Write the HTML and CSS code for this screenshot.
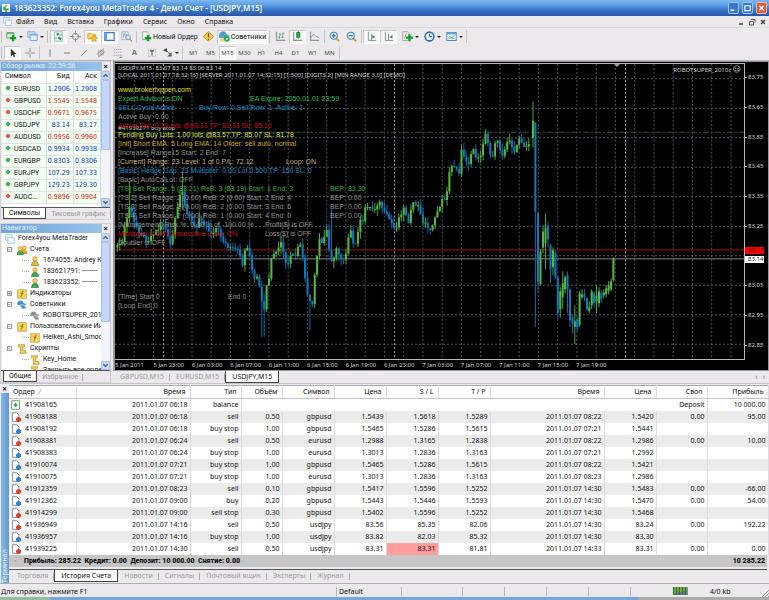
FILE: index.html
```html
<!DOCTYPE html>
<html lang="ru">
<head>
<meta charset="utf-8">
<title>183623352: Forex4you MetaTrader 4</title>
<link rel="stylesheet" href="styles.css">
</head>
<body>
<svg class="defs" aria-hidden="true">
  <defs>
    <symbol id="plus" viewBox="0 0 14 14"><path d="M1 2h9v7H1z" fill="#dff0e4" stroke="#4a9a62"/><path d="M1 2h9v2H1z" fill="#5db578"/><path d="M9 5v8M5 9h8" stroke="#0f9a25" stroke-width="3"/></symbol>
    <symbol id="windows" viewBox="0 0 14 14"><path d="M1 1h9v7H1z" fill="#cfe4f8" stroke="#6aa0d6"/><path d="M4 4h9v8H4z" fill="#e4f1fd" stroke="#5b95cf"/><path d="M4 4h9v2H4z" fill="#7db2e4"/></symbol>
    <symbol id="market" viewBox="0 0 14 14"><path d="M2 1h10v12H2z" fill="#eef8ee" stroke="#7fb2b8"/><path d="M4 4l2-2 2 2-2 2z" fill="#2b9b45"/><path d="M6 9l2-2 3 3-2 2z" fill="#2b9b45"/><path d="M8 5h3M3 9h2" stroke="#3a7fc4"/></symbol>
    <symbol id="target" viewBox="0 0 14 14"><circle cx="7" cy="7" r="4" fill="none" stroke="#888" stroke-width="1.2"/><path d="M7 0v5M7 9v5M0 7h5M9 7h5" stroke="#888" stroke-width="1.2"/></symbol>
    <symbol id="navi" viewBox="0 0 14 14"><path d="M1 3h4l1 1h5v6H1z" fill="#f8d65c" stroke="#c9962a"/><path d="M9 5l1.5 3 3 .4-2.200 2 .6 3L9 12l-2.800 1.400.6-3-2.200-2 3-.4z" fill="#f9c23a" stroke="#b88420" stroke-width=".7"/></symbol>
    <symbol id="term" viewBox="0 0 14 14"><path d="M1 2h12v10H1z" fill="#fff" stroke="#3b78c4" stroke-width="1.500"/><path d="M1 2h3v10H1z" fill="#6ea4de"/><path d="M6 10h6" stroke="#bcd" /></symbol>
    <symbol id="tester" viewBox="0 0 14 14"><path d="M1 1h8v10H1z" fill="#e5eef4" stroke="#9db4c4"/><path d="M3 3v5M5 2v5M7 4v5" stroke="#6c99b8"/><circle cx="9" cy="8" r="3" fill="#cfe8f4" stroke="#6b8ca0"/><path d="M11 10l3 4" stroke="#a58b50" stroke-width="1.500"/></symbol>
    <symbol id="order" viewBox="0 0 14 14"><path d="M2 1h6l2 2v8H2z" fill="#f7f7f7" stroke="#8a9a8a"/><path d="M9 5v8M5 9h8" stroke="#0f9a25" stroke-width="3"/></symbol>
    <symbol id="warn" viewBox="0 0 14 14"><path d="M7 0.500L13.500 7 7 13.500.5 7z" fill="#f5c93c" stroke="#b98a1c"/><path d="M7 3v5M7 9.500v1.500" stroke="#6b4a08" stroke-width="1.400"/></symbol>
    <symbol id="hat" viewBox="0 0 14 14"><path d="M0 6C1 0 8-1 9 4l4 2-3 2-9 1z" fill="#4fa0d0" stroke="#2c759f" stroke-width=".6"/><path d="M2 9h6l1 4H2z" fill="#efcf74"/><circle cx="10" cy="10" r="3.600" fill="#1ea63c"/><path d="M9 8l3 2-3 2z" fill="#fff"/></symbol>
    <symbol id="bars" viewBox="0 0 14 14"><path d="M2 1v11h11" fill="none" stroke="#8a9a92" stroke-width="1.500"/><path d="M6 3v7M4 8h2M6 4h2M10 2v7M10 3h2M8 8h2" stroke="#6c8478"/></symbol>
    <symbol id="candles" viewBox="0 0 14 14"><path d="M2 1v11h11" fill="none" stroke="#8a9a92" stroke-width="1.500"/><path d="M8 0v10" stroke="#17752b"/><path d="M6 2h4v6H6z" fill="#22b043" stroke="#17752b"/></symbol>
    <symbol id="line" viewBox="0 0 14 14"><path d="M2 1v11h11" fill="none" stroke="#8a9a92" stroke-width="1.500"/><path d="M3 8l3-4 3 3 4 1" fill="none" stroke="#6c8478"/></symbol>
    <symbol id="zin" viewBox="0 0 14 14"><path d="M9 9l4 4" stroke="#caa23c" stroke-width="2.500"/><circle cx="6" cy="6" r="4.500" fill="#d7ecfa" stroke="#4787c2" stroke-width="1.300"/><path d="M6 3.500v5M3.500 6h5" stroke="#1d62a8" stroke-width="1.300"/></symbol>
    <symbol id="zout" viewBox="0 0 14 14"><path d="M9 9l4 4" stroke="#caa23c" stroke-width="2.500"/><circle cx="6" cy="6" r="4.500" fill="#d7ecfa" stroke="#4787c2" stroke-width="1.300"/><path d="M3.500 6h5" stroke="#1d62a8" stroke-width="1.300"/></symbol>
    <symbol id="scroll" viewBox="0 0 14 14"><path d="M3 1v11h10M7 3v9" fill="none" stroke="#7f9088" stroke-width="1.200"/><path d="M8 5l4 2.500-4 2.500z" fill="#22a03c"/></symbol>
    <symbol id="shift" viewBox="0 0 14 14"><path d="M3 1v11h10M7 3v9" fill="none" stroke="#7f9088" stroke-width="1.200"/><path d="M12 5L8 7.500l4 2.500z" fill="#55796b"/></symbol>
    <symbol id="indic" viewBox="0 0 14 14"><path d="M1 1h6l2 2v9H1z" fill="#f5f5f2" stroke="#8d9690"/><path d="M3 9c2 0 1-6 3-6" fill="none" stroke="#a06d2c"/><path d="M9.500 4v9M5 8.500h9" stroke="#12a02a" stroke-width="3"/></symbol>
    <symbol id="clock" viewBox="0 0 14 14"><circle cx="7" cy="7" r="5.600" fill="#eaf4fd" stroke="#2e6fbe" stroke-width="2"/><path d="M7 3.500V7h3" fill="none" stroke="#1d4f92" stroke-width="1.200"/></symbol>
    <symbol id="templ" viewBox="0 0 14 14"><path d="M1 2h12v10H1z" fill="#f3f9fe" stroke="#4f8bca" stroke-width="1.300"/><path d="M1 2h12v2.500H1z" fill="#6fa5dc"/><path d="M3 8l2-1 2 1 4-2M3 10l3-1 5 1" fill="none" stroke="#3fa05a"/></symbol>
    <symbol id="cursor" viewBox="0 0 14 14"><path d="M4 1v11l2.500-2.500L8 13l2-1-1.500-3.200H12z" fill="#333"/></symbol>
    <symbol id="cross" viewBox="0 0 14 14"><path d="M7 0v6M7 8v6M0 7h6M8 7h6" stroke="#888" stroke-width="1.300"/></symbol>
    <symbol id="vline" viewBox="0 0 14 14"><path d="M7 2v10" stroke="#777" stroke-width="1.300"/></symbol>
    <symbol id="hline" viewBox="0 0 14 14"><path d="M3 7h8" stroke="#666" stroke-width="1.300"/></symbol>
    <symbol id="tline" viewBox="0 0 14 14"><path d="M3 11l8-8" stroke="#777" stroke-width="1.300"/></symbol>
    <symbol id="channel" viewBox="0 0 14 14"><path d="M1 9l10-8M3 13l10-8M4 3v9M7 2v9M10 2v8" stroke="#777"/></symbol>
    <symbol id="fibo" viewBox="0 0 14 14"><path d="M1 2h12M1 6h12M1 10h12" stroke="#888" stroke-dasharray="2 1"/><path d="M9 13h4" stroke="#444"/></symbol>
    <symbol id="letterT" viewBox="0 0 14 14"><path d="M2 2h10v10H2z" fill="none" stroke="#999" stroke-dasharray="1 1"/><path d="M4 4h6M7 4v7" stroke="#555" stroke-width="1.500"/></symbol>
    <symbol id="arrows" viewBox="0 0 14 14"><path d="M1 3l4-2v4zM4 3l6 6" fill="#444" stroke="#444" stroke-width="1.300"/><path d="M12 6v6H6z" fill="#555"/></symbol>
    <symbol id="docwin" viewBox="0 0 14 14"><path d="M1 1h9v8H1z" fill="#e8f3fd" stroke="#86b4e0"/><path d="M4 5h9v8H4z" fill="#fff" stroke="#86b4e0"/></symbol>
    <symbol id="people" viewBox="0 0 14 14"><circle cx="10" cy="4" r="2.800" fill="#f6cf68" stroke="#a57810" stroke-width=".7"/><path d="M6 12.500c0-8 8-8 8 0z" fill="#e8a828" stroke="#a57810" stroke-width=".7"/><circle cx="4.500" cy="5" r="3" fill="#f6cf68" stroke="#a57810" stroke-width=".7"/><path d="M0 13.500c0-7 9-7 9 0z" fill="#36b34a" stroke="#187528" stroke-width=".7"/></symbol>
    <symbol id="user" viewBox="0 0 14 14"><circle cx="7" cy="4" r="3.200" fill="#f6cf68" stroke="#996b10" stroke-width=".7"/><path d="M2 13.500c0-8 10-8 10 0z" fill="currentColor" stroke="#555" stroke-width=".7"/></symbol>
    <symbol id="fx" viewBox="0 0 14 14"><path d="M1 1h12v12H1z" fill="#f8d75e" stroke="#c29a2a"/><path d="M9 3c-3-1-1 8-4 8M5 6h4" fill="none" stroke="#7c5608" stroke-width="1.200"/></symbol>
    <symbol id="adv" viewBox="0 0 14 14"><path d="M0 5C2-1 8 0 9 4l4 2-3 2-9-1z" fill="currentColor"/><path d="M4 8c3-3 8-1 9 4l-5 1z" fill="currentColor" stroke="#fff" stroke-width=".8"/></symbol>
    <symbol id="script" viewBox="0 0 14 14"><path d="M2 1h9l-1 3H8v5h4l1 4H4l1-3V4H2z" fill="#f8d35a" stroke="#b88c22"/></symbol>
    <symbol id="deal" viewBox="0 0 14 14"><path d="M2 1h6l3 3v9H2z" fill="#fff" stroke="#7d8790" stroke-width="1.300"/><circle cx="10.500" cy="10.500" r="3.500" fill="currentColor"/></symbol>
    <symbol id="bal" viewBox="0 0 14 14"><path d="M1 1h11v12H1z" fill="#fff" stroke="#5f9a6e" stroke-width="1.300"/><path d="M6.500 4l3 3-3 3-3-3z" fill="#3aa34e"/></symbol>
    <symbol id="dia" viewBox="0 0 14 14"><path d="M7 1l6 6-6 6-6-6z" fill="currentColor"/><path d="M5 7h4" stroke="#fff" stroke-opacity=".6" stroke-width="1.500"/></symbol>
  </defs>
</svg>

<header class="titlebar">
  <svg class="logo" viewBox="0 0 14 14"><path d="M0 0h14v14H0z" fill="#fff"/><path d="M1 7l7-6v4H6v3h6v3H9v3H6v-3H3z" fill="#2f9e44"/></svg>
  <h1>183623352: Forex4you MetaTrader 4 - Демо Счет - [USDJPY,M15]</h1>
  <div class="win-buttons">
    <button aria-label="Свернуть"><svg viewBox="0 0 12 12"><path d="M2 9h5" stroke="#fff" stroke-width="2"/></svg></button>
    <button aria-label="Развернуть"><svg viewBox="0 0 12 12"><path d="M2.500 3h7v6.500h-7zM2 3h8" fill="none" stroke="#fff" stroke-width="1.500"/></svg></button>
    <button class="close" aria-label="Закрыть"><svg viewBox="0 0 12 12"><path d="M3 3l6 6M9 3l-6 6" stroke="#fff" stroke-width="2"/></svg></button>
  </div>
</header>

<nav class="menubar">
  <svg class="ic"><use href="#docwin"/></svg>
  <button>Файл</button><button>Вид</button><button>Вставка</button><button>Графики</button><button>Сервис</button><button>Окно</button><button>Справка</button>
  <div class="doc-buttons">
    <button aria-label="Свернуть окно"><svg viewBox="0 0 8 8"><path d="M2 6h4" stroke="#444" stroke-width="1.500"/></svg></button>
    <button aria-label="Восстановить окно"><svg viewBox="0 0 8 8"><path d="M3 1.500h4v3M1.500 3.500h4v3.500h-4z" fill="none" stroke="#555"/></svg></button>
    <button aria-label="Закрыть окно"><svg viewBox="0 0 8 8"><path d="M2 2l4 4M6 2L2 6" stroke="#444" stroke-width="1.400"/></svg></button>
  </div>
</nav>

<div class="toolbar main-tools">
  <i class="grip"></i>
  <button class="tool drop" aria-label="Новый график"><svg><use href="#plus"/></svg></button>
  <button class="tool drop" aria-label="Профили"><svg><use href="#windows"/></svg></button>
  <i class="grip"></i>
  <button class="tool on" aria-label="Обзор рынка"><svg><use href="#market"/></svg></button>
  <button class="tool" aria-label="Окно данных"><svg><use href="#target"/></svg></button>
  <button class="tool on" aria-label="Навигатор"><svg><use href="#navi"/></svg></button>
  <button class="tool on" aria-label="Терминал"><svg><use href="#term"/></svg></button>
  <button class="tool" aria-label="Тестер"><svg><use href="#tester"/></svg></button>
  <i class="grip"></i>
  <button class="tool wide"><svg><use href="#order"/></svg>Новый Ордер</button>
  <button class="tool" aria-label="Внимание"><svg><use href="#warn"/></svg></button>
  <button class="tool wide on"><svg><use href="#hat"/></svg>Советники</button>
  <i class="grip"></i>
  <button class="tool" aria-label="Бары"><svg><use href="#bars"/></svg></button>
  <button class="tool on" aria-label="Свечи"><svg><use href="#candles"/></svg></button>
  <button class="tool" aria-label="Линия"><svg><use href="#line"/></svg></button>
  <i class="sep"></i>
  <button class="tool" aria-label="Увеличить"><svg><use href="#zin"/></svg></button>
  <button class="tool" aria-label="Уменьшить"><svg><use href="#zout"/></svg></button>
  <i class="sep"></i>
  <button class="tool on" aria-label="Автопрокрутка"><svg><use href="#scroll"/></svg></button>
  <button class="tool on" aria-label="Сдвиг графика"><svg><use href="#shift"/></svg></button>
  <div class="drops">
    <button class="tool drop" aria-label="Индикаторы"><svg><use href="#indic"/></svg></button>
    <button class="tool drop" aria-label="Периоды"><svg><use href="#clock"/></svg></button>
    <button class="tool drop" aria-label="Шаблоны"><svg><use href="#templ"/></svg></button>
  </div>
  <i class="sep"></i>
</div>

<div class="toolbar draw-tools">
  <i class="grip"></i>
  <button class="tool on" aria-label="Курсор"><svg><use href="#cursor"/></svg></button>
  <button class="tool" aria-label="Перекрестие"><svg><use href="#cross"/></svg></button>
  <i class="sep"></i>
  <button class="tool" aria-label="Вертикальная линия"><svg><use href="#vline"/></svg></button>
  <button class="tool" aria-label="Горизонтальная линия"><svg><use href="#hline"/></svg></button>
  <button class="tool" aria-label="Трендовая линия"><svg><use href="#tline"/></svg></button>
  <button class="tool" aria-label="Канал"><svg><use href="#channel"/></svg></button>
  <button class="tool" aria-label="Фибоначчи"><svg><use href="#fibo"/></svg></button>
  <button class="tool letter">A</button>
  <button class="tool" aria-label="Метка"><svg><use href="#letterT"/></svg></button>
  <button class="tool drop" aria-label="Стрелки"><svg><use href="#arrows"/></svg></button>
  <i class="grip"></i>
  <button class="tool">M1</button><button class="tool">M5</button><button class="tool on">M15</button><button class="tool">M30</button><button class="tool">H1</button><button class="tool">H4</button><button class="tool">D1</button><button class="tool">W1</button><button class="tool">MN</button>
  <i class="sep"></i>
</div>

<main class="workspace">
  <aside class="side">
    <section class="panel">
      <header class="panel-head"><h2>Обзор рынка: 22:59:56</h2><button aria-label="Закрыть обзор рынка">×</button></header>
      <div class="panel-body">
        <div class="clip quotes-clip">
          <table class="quotes">
            <thead><tr><th>Символ</th><th>Бид</th><th>Аск</th></tr></thead>
            <tbody>
              <tr class="up"><td><svg><use href="#dia"/></svg>EURUSD</td><td>1.2906</td><td>1.2908</td></tr>
              <tr class="down"><td><svg><use href="#dia"/></svg>GBPUSD</td><td>1.5545</td><td>1.5548</td></tr>
              <tr class="down"><td><svg><use href="#dia"/></svg>USDCHF</td><td>0.9671</td><td>0.9675</td></tr>
              <tr class="up"><td><svg><use href="#dia"/></svg>USDJPY</td><td>83.14</td><td>83.17</td></tr>
              <tr class="down"><td><svg><use href="#dia"/></svg>AUDUSD</td><td>0.9956</td><td>0.9960</td></tr>
              <tr class="up"><td><svg><use href="#dia"/></svg>USDCAD</td><td>0.9934</td><td>0.9938</td></tr>
              <tr class="up"><td><svg><use href="#dia"/></svg>EURGBP</td><td>0.8303</td><td>0.8306</td></tr>
              <tr class="up"><td><svg><use href="#dia"/></svg>EURJPY</td><td>107.29</td><td>107.33</td></tr>
              <tr class="up"><td><svg><use href="#dia"/></svg>GBPJPY</td><td>129.23</td><td>129.30</td></tr>
              <tr class="down"><td><svg><use href="#dia"/></svg>AUDC...</td><td>0.9896</td><td>0.9904</td></tr>
            </tbody>
          </table>
        </div>
        <div class="scrollbar"><button aria-label="Вверх"><svg viewBox="0 0 8 8"><path d="M1.500 5.500L4 3l2.500 2.500" fill="none" stroke="#40608c" stroke-width="1.500"/></svg></button><span class="thumb quotes-thumb"></span><button aria-label="Вниз"><svg viewBox="0 0 8 8"><path d="M1.500 2.500L4 5l2.500-2.500" fill="none" stroke="#40608c" stroke-width="1.500"/></svg></button></div>
      </div>
      <div class="tabs side-tabs"><button class="active">Символы</button><button>Тиковый график</button></div>
    </section>

    <section class="panel">
      <header class="panel-head"><h2>Навигатор</h2><button aria-label="Закрыть навигатор">×</button></header>
      <div class="panel-body">
        <div class="clip tree-clip">
          <ul class="tree">
            <li class="root"><svg class="c-blue"><use href="#docwin"/></svg>Forex4you MetaTrader</li>
            <li><b class="box">−</b><svg><use href="#people"/></svg>Счета</li>
            <li class="leaf"><svg class="c-gold"><use href="#user"/></svg>1674055: Andrey K</li>
            <li class="leaf"><svg class="c-green"><use href="#user"/></svg>183621791: --------</li>
            <li class="leaf"><svg class="c-green"><use href="#user"/></svg>183623352: --------</li>
            <li><b class="box">+</b><svg><use href="#fx"/></svg>Индикаторы</li>
            <li><b class="box">−</b><svg class="c-blue"><use href="#adv"/></svg>Советники</li>
            <li class="leaf"><svg class="c-gray"><use href="#adv"/></svg>ROBOTSUPER_2010</li>
            <li><b class="box">−</b><svg><use href="#fx"/></svg>Пользовательские Инд</li>
            <li class="leaf"><svg><use href="#fx"/></svg>Heiken_Ashi_Smoot</li>
            <li><b class="box">−</b><svg><use href="#script"/></svg>Скрипты</li>
            <li class="leaf"><svg><use href="#script"/></svg>Key_Home</li>
            <li class="leaf"><svg><use href="#script"/></svg>Закрыть все ордер</li>
          </ul>
        </div>
        <div class="scrollbar"><button aria-label="Вверх"><svg viewBox="0 0 8 8"><path d="M1.500 5.500L4 3l2.500 2.500" fill="none" stroke="#40608c" stroke-width="1.500"/></svg></button><span class="thumb tree-thumb"></span><button aria-label="Вниз"><svg viewBox="0 0 8 8"><path d="M1.500 2.500L4 5l2.500-2.500" fill="none" stroke="#40608c" stroke-width="1.500"/></svg></button></div>
      </div>
      <div class="tabs side-tabs"><button class="active">Общие</button><button>Избранное</button></div>
    </section>
  </aside>

  <section class="charts">
    <div class="chart">
      <div class="plot">
        <svg id="plot" viewBox="0 0 629 296" preserveAspectRatio="none"></svg>
        <div class="ohlc">USDJPY,M15&nbsp; 83.07 83.14 83.06 83.14<br>[LOCAL 2011.01.07 18:32:16] [SERVER 2011.01.07 14:32:15] [1:500] [DIGITS 2] [MIN RANGE 3.0] [DEMO]</div>
        <div class="robot">ROBOTSUPER_2010c <span>☺</span></div>
        <div class="pending">#41939271 buy stop</div>
        <div class="comment">
          <p class="yellow">www.brokerfxppen.com</p>
          <p class="mint"><span class="c1">Expert Advisor is:ON</span><span>EA Expire: 2050.01.01 23:59</span></p>
          <p class="sky"><span class="c0">SELL Cycle Active</span><span>Buy Row: 0 Sell Row: 1 -Active: 1</span></p>
          <p>Active Buy: 0.00</p>
          <p class="red">Active Sell: 0.50 lots @83.31 TP: 81.81 SL: 85.10</p>
          <p class="yellow">Pending Buy Lots: 1.00 lots @83.57 TP: 85.07 SL: 81.78</p>
          <p class="gold">[Init] Short EMA: 5 Long EMA: 14 Order: sell auto, normal</p>
          <p>[Increase] Range15 Start: 2 End: 7</p>
          <p class="tan"><span class="c2">[Current] Range: 23 Level: 1 of 0 P/L: 72.12</span><span>Loop: ON</span></p>
          <p class="sky">[Basic] Hedge Gap: 23 Multiplier: 0.00 Lot 0.500 TP: 150 SL: 0</p>
          <p>[Basic] AutoCalLot: OFF</p>
          <p class="green"><span class="c3">[TS] Sell Range: 5 (83.21) ReB: 3 (83.19) Start: 1 End: 3</span><span>BEP: 83.30</span></p>
          <p><span class="c3">[TS 2] Sell Range: 2 (0.00) ReB: 2 (0.00) Start: 2 End: 4</span><span>BEP: 0.00</span></p>
          <p><span class="c3">[TS 3] Sell Range: 1 (0.00) ReB: 2 (0.00) Start: 3 End: 6</span><span>BEP: 0.00</span></p>
          <p><span class="c3">[TS 4] Sell Range: 2 (0.00) ReB: 1 (0.00) Start: 4 End: 0</span><span>BEP: 0.00</span></p>
          <p><span class="c4">[Management] Risk %: 0.00 % of -100.00 %</span><span>Profit($) is OFF</span></p>
          <p><span class="c4 red">Manager is ON Consecutive Loop: ON</span><span>Loss($) is OFF</span></p>
          <p>Doubler is OFF</p>
          <p class="later"><span class="c5">[Time] Start 0</span><span>End 0</span></p>
          <p>[Loop End] 0</p>
        </div>
      </div>
      <div class="prices">
        <span>83.75</span><span>83.65</span><span>83.55</span><span>83.45</span><span>83.35</span><span>83.25</span><span class="hidden-level"></span><span>83.05</span><span>82.95</span><span>82.85</span>
        <b class="tag ask">83.17</b><b class="tag bid">83.14</b>
      </div>
      <div class="times"><span>5 Jan 2011</span><span>5 Jan 23:00</span><span>6 Jan 03:00</span><span>6 Jan 07:00</span><span>6 Jan 11:00</span><span>6 Jan 15:00</span><span>6 Jan 19:00</span><span>6 Jan 23:00</span><span>7 Jan 03:00</span><span>7 Jan 07:00</span><span>7 Jan 11:00</span><span>7 Jan 15:00</span><span>7 Jan 19:00</span></div>
    </div>
    <div class="tabs chart-tabs"><button>GBPUSD,M15</button><button>EURUSD,M15</button><button class="active">USDJPY,M15</button><span class="pager">‹ &nbsp; ›</span></div>
  </section>
</main>

<section class="terminal">
  <div class="rail"><button aria-label="Закрыть терминал">×</button><h2>Терминал</h2></div>
  <div class="terminal-main">
    <table class="deals">
      <colgroup><col class="w67"><col class="w114"><col class="w51"><col class="w41"><col class="w52"><col class="w52"><col class="w52"><col class="w52"><col class="w114"><col class="w52"><col class="w51"><col class="w61"></colgroup>
      <thead><tr><th>Ордер &nbsp;<i>/</i></th><th>Время</th><th>Тип</th><th>Объём</th><th>Символ</th><th>Цена</th><th>S / L</th><th>T / P</th><th>Время</th><th>Цена</th><th>Своп</th><th>Прибыль</th></tr></thead>
      <tbody>
        <tr class="balance"><td><svg><use href="#bal"/></svg>41908165</td><td>2011.01.07 06:18</td><td>balance</td><td colspan="8">Deposit</td><td>10 000.00</td></tr>
        <tr class="sell"><td><svg><use href="#deal"/></svg>41908188</td><td>2011.01.07 06:18</td><td>sell</td><td>0.50</td><td>gbpusd</td><td>1.5439</td><td>1.5618</td><td>1.5289</td><td>2011.01.07 08:22</td><td>1.5420</td><td>0.00</td><td>95.00</td></tr>
        <tr class="buy"><td><svg><use href="#deal"/></svg>41908192</td><td>2011.01.07 06:18</td><td>buy stop</td><td>1.00</td><td>gbpusd</td><td>1.5465</td><td>1.5286</td><td>1.5615</td><td>2011.01.07 07:21</td><td>1.5441</td><td></td><td></td></tr>
        <tr class="sell"><td><svg><use href="#deal"/></svg>41908381</td><td>2011.01.07 06:24</td><td>sell</td><td>0.50</td><td>eurusd</td><td>1.2988</td><td>1.3165</td><td>1.2838</td><td>2011.01.07 08:22</td><td>1.2986</td><td>0.00</td><td>10.00</td></tr>
        <tr class="buy"><td><svg><use href="#deal"/></svg>41908383</td><td>2011.01.07 06:24</td><td>buy stop</td><td>1.00</td><td>eurusd</td><td>1.3013</td><td>1.2836</td><td>1.3163</td><td>2011.01.07 07:21</td><td>1.2992</td><td></td><td></td></tr>
        <tr class="buy"><td><svg><use href="#deal"/></svg>41910074</td><td>2011.01.07 07:21</td><td>buy stop</td><td>1.00</td><td>gbpusd</td><td>1.5465</td><td>1.5286</td><td>1.5615</td><td>2011.01.07 08:22</td><td>1.5421</td><td></td><td></td></tr>
        <tr class="buy"><td><svg><use href="#deal"/></svg>41910075</td><td>2011.01.07 07:21</td><td>buy stop</td><td>1.00</td><td>eurusd</td><td>1.3013</td><td>1.2836</td><td>1.3163</td><td>2011.01.07 08:23</td><td>1.2986</td><td></td><td></td></tr>
        <tr class="sell"><td><svg><use href="#deal"/></svg>41912359</td><td>2011.01.07 08:23</td><td>sell</td><td>0.10</td><td>gbpusd</td><td>1.5417</td><td>1.5596</td><td>1.5252</td><td>2011.01.07 14:30</td><td>1.5483</td><td>0.00</td><td>-66.00</td></tr>
        <tr class="buy"><td><svg><use href="#deal"/></svg>41912362</td><td>2011.01.07 09:00</td><td>buy</td><td>0.20</td><td>gbpusd</td><td>1.5443</td><td>1.5446</td><td>1.5593</td><td>2011.01.07 14:30</td><td>1.5470</td><td>0.00</td><td>54.00</td></tr>
        <tr class="sell"><td><svg><use href="#deal"/></svg>41914299</td><td>2011.01.07 09:00</td><td>sell stop</td><td>0.30</td><td>gbpusd</td><td>1.5402</td><td>1.5596</td><td>1.5252</td><td>2011.01.07 14:30</td><td>1.5468</td><td></td><td></td></tr>
        <tr class="sell"><td><svg><use href="#deal"/></svg>41936949</td><td>2011.01.07 14:16</td><td>sell</td><td>0.50</td><td>usdjpy</td><td>83.56</td><td>85.35</td><td>82.06</td><td>2011.01.07 14:30</td><td>83.24</td><td>0.00</td><td>192.22</td></tr>
        <tr class="buy"><td><svg><use href="#deal"/></svg>41936957</td><td>2011.01.07 14:16</td><td>buy stop</td><td>1.00</td><td>usdjpy</td><td>83.82</td><td>82.03</td><td>85.32</td><td>2011.01.07 14:30</td><td>83.30</td><td></td><td></td></tr>
        <tr class="sell"><td><svg><use href="#deal"/></svg>41939225</td><td>2011.01.07 14:30</td><td>sell</td><td>0.50</td><td>usdjpy</td><td>83.31</td><td class="hit">83.31</td><td>81.81</td><td>2011.01.07 14:33</td><td>83.31</td><td>0.00</td><td>0.00</td></tr>
      </tbody>
    </table>
    <div class="summary"><span class="mark">▫</span><strong>Прибыль: 285.22&nbsp; Кредит: 0.00&nbsp; Депозит: 10 000.00&nbsp; Снятие: 0.00</strong><strong class="total">10 285.22</strong></div>
    <div class="tabs term-tabs"><button>Торговля</button><button class="active">История Счета</button><button>Новости</button><button>Сигналы</button><button>Почтовый ящик</button><button>Эксперты</button><button>Журнал</button></div>
  </div>
</section>

<footer class="status">
  <span class="hint">Для справки, нажмите F1</span><span class="s-profile">Default</span><span class="s-a"></span><span class="s-b"></span><span class="s-b"></span><span class="s-b"></span><span class="s-b"></span>
  <span class="conn"><svg viewBox="0 0 15 8"><path d="M0 0h15v8H0z" fill="#1c6e3a"/><path d="M2 0v8M5 0v8M8 0v8M11 0v8M14 0v8" stroke="#e8d84a"/><path d="M1 7l13-4v5H1z" fill="#2b5aa8" fill-opacity=".5"/></svg></span>
  <span class="s-kb">4/0 kb</span>
  <svg class="resize" viewBox="0 0 8 8"><path d="M1 8l7-7M4 8l4-4M7 8l1-1" stroke="#999"/></svg>
</footer>
<div class="taskbar"></div>
<script src="chart.js"></script>
</body>
</html>
```
FILE: chart.js
```js
// Candles of the USDJPY M15 plot, in plot units (629 x 296).
const NS = 'http://www.w3.org/2000/svg';
const plot = document.getElementById('plot');
const STEP = 2.406;

// Closing levels: position, level.
const closes = [
  0,184, 3,178, 6,186, 9,166, 12,155, 15,140, 18,158, 22,163, 26,170, 30,175, 34,176, 38,169, 43,166, 48,160, 52,168,
  55,182, 58,172, 61,150, 64,138, 67,128, 70,143, 74,150, 78,162, 82,166, 85,150, 88,158, 92,163, 96,170, 100,164,
  104,168, 108,176, 112,184, 117,187, 121,187, 125,190, 128,204, 131,178, 134,188, 137,208, 140,218, 143,214, 146,238,
  149,246, 152,222, 155,216, 157,190, 161,190, 166,180, 170,196, 172,206, 176,194, 181,192, 185,178, 188,198, 191,226,
  194,234, 197,248, 199,218, 202,196, 205,172, 208,184, 211,162, 215,190, 218,202, 221,184, 225,192, 228,196, 232,185,
  235,166, 238,180, 241,182, 244,158, 248,160, 251,138, 254,144, 259,146, 263,138, 267,143, 270,152, 274,155, 278,162,
  280,166, 284,154, 288,144, 291,150, 294,158, 297,143, 300,140, 303,142, 306,154, 310,160, 314,167, 317,161, 320,157,
  323,145, 326,139, 330,134, 333,122, 335,105, 338,101, 341,102, 344,109, 346,88, 350,93, 353,100, 356,90, 358,84,
  361,92, 364,98, 367,92, 369,68, 372,72, 375,88, 378,93, 381,76, 384,80, 387,92, 390,88, 393,75, 396,82, 400,88,
  403,74, 406,76, 409,86, 412,80, 415,77, 418,74
];
// Long shadows: position, high, low.
const shadows = [[15,118,160], [67,108,146], [55,160,186], [148,230,274], [196,240,268], [216,146,192]];
// The fall and the recovery, candle by candle: position, high, top, bottom, low, rising.
const tail = [
  [418,38,57,74,84,1], [420.400,58,59,148,264,0], [423,148,150,219,230,0], [425.500,186,188,221,222,1],
  [428,162,168,184,190,1], [430.500,150,164,180,206,1], [433,158,162,176,184,0], [435.500,180,182,206,220,0],
  [438,184,187,204,212,1], [440.400,187,190,214,216,0], [442.800,212,214,250,256,0], [445.300,224,228,246,254,1],
  [447.700,208,220,234,246,1], [450.100,212,214,226,230,1], [452.500,208,212,226,250,0], [455,224,226,257,264,0],
  [457.400,252,255,260,270,0], [459.800,242,258,264,281,1], [462.200,254,256,264,268,0], [464.600,228,230,262,264,1],
  [467,226,231,234,236,1], [469.500,226,231,234,238,0], [472,234,235,246,248,0], [474.300,238,244,248,250,1],
  [476.700,226,228,242,246,1], [479.100,228,230,240,244,0], [481.500,222,232,238,250,1], [484,224,228,240,244,1],
  [486.300,226,230,236,240,0], [488.800,226,229,232,235,1], [491.200,222,225,231,234,1], [493.600,218,222,228,231,1],
  [496,215,218,226,228,1], [498.400,194,195,217,219,1]
];

function levelAt(x) {
  for (let k = 0; k + 3 < closes.length; k += 2) {
    if (x >= closes[k] && x <= closes[k + 2]) {
      const t = (x - closes[k]) / (closes[k + 2] - closes[k]);
      return closes[k + 1] + t * (closes[k + 3] - closes[k + 1]);
    }
  }
  return closes[1];
}
const wave = n => { const v = Math.sin(n * 12.9898) * 43758.5453; return v - Math.floor(v); };

const paths = { gw: '', gb: '', bw: '', bb: '' };
function candle(x, hi, top, bot, lo, up) {
  const k = up ? 'g' : 'b';
  paths[k + 'w'] += `M${x} ${hi}V${lo}`;
  paths[k + 'b'] += `M${x} ${top}V${Math.max(bot, top + 1)}`;
}
let prev = levelAt(0);
for (let i = 1; i * STEP < 416; i++) {
  const x = +(i * STEP).toFixed(1);
  const c = levelAt(x) + (wave(i) - 0.5) * 6;
  const top = Math.min(prev, c), bot = Math.max(prev, c);
  let hi = top - wave(i + 300) * 7, lo = bot + wave(i + 700) * 7;
  for (const s of shadows) if (Math.abs(s[0] - x) < 1.21) { hi = Math.min(hi, s[1]); lo = Math.max(lo, s[2]); }
  candle(x, hi, top, bot, lo, c < prev);
  prev = c;
}
tail.forEach(t => candle(...t));

function add(d, cls) {
  const p = document.createElementNS(NS, 'path');
  p.setAttribute('d', d);
  p.setAttribute('class', cls);
  plot.appendChild(p);
}
let grid = '';
for (let k = 0; k < 10; k++) grid += `M0 ${(14.8 + 29.6 * k).toFixed(1)}H629`;
for (let k = 0; k < 32; k++) grid += `M${(19.2 + 19.25 * k).toFixed(1)} 0V296`;
add(grid, 'grid');
add('M48.500 0V296M279.500 0V296M510.500 0V296', 'grid day');
add('M0 68.500H629', 'pend-line');
add('M0 186.500H629', 'ask-line');
add('M0 195.500H629', 'bid-line');
add(paths.gw, 'wick g'); add(paths.bw, 'wick b'); add(paths.gb, 'body g'); add(paths.bb, 'body b');
add('M499 0h6l-3 3z', 'marker');
```
FILE: styles.css
```css
* { box-sizing: border-box; }
body { margin: 0; min-height: 100vh; display: flex; flex-direction: column; background: #ece9ec; color: #111; font: 7px/12px "Noto Sans", "Open Sans", sans-serif; }
button { margin: 0; padding: 0; border: 0; background: none; font: inherit; color: inherit; }
h1, h2, p, ul { margin: 0; padding: 0; font: inherit; }
ul { list-style: none; }
svg { display: block; flex: none; }
table { border-collapse: collapse; }
.defs { position: absolute; width: 0; height: 0; }

.titlebar { display: flex; align-items: center; gap: 4px; height: 16px; padding: 0 2px; background: linear-gradient(#7db8ee, #5a9ee4 30%, #3a76c8 60%, #2c55a6); color: #fff; }
.titlebar h1 { flex: 1; font: 600 8px/16px "Open Sans", "Noto Sans", sans-serif; white-space: nowrap; }
.logo { width: 8px; height: 10px; }
.win-buttons { display: flex; gap: 3px; }
.win-buttons button { width: 11px; height: 12px; border: 1px solid #9cc6f2; border-radius: 2px; background: #3a78cc; }
.win-buttons svg { width: 9px; height: 10px; }
.win-buttons .close { background: #dc5a38; border-color: #f0b8a8; }

.menubar { display: flex; align-items: center; gap: 10px; height: 12px; padding: 0 2px; border-bottom: 1px solid #dcdadc; }
.menubar > .ic { width: 9px; height: 9px; margin-left: 1px; margin-right: -6px; }
.doc-buttons { margin-left: auto; display: flex; gap: 3px; }
.doc-buttons svg { width: 8px; height: 8px; }

.toolbar { display: flex; align-items: center; height: 17px; }
.main-tools { font-family: Roboto, "Noto Sans", sans-serif; }
.draw-tools { height: 16px; border-bottom: 1px solid #b4b2b4; color: #444; font-size: 6px; }
.tool { flex: none; display: flex; align-items: center; justify-content: center; gap: 1px; width: 17px; height: 14px; border: 1px solid transparent; white-space: nowrap; }
.tool svg { width: 11px; height: 11px; }
.draw-tools .tool svg { width: 10px; height: 10px; }
.main-tools .on, .draw-tools .on { background: #f8f7f8; border-color: #c9c7c9; border-right-color: #fff; border-bottom-color: #fff; }
.tool.drop { width: 21px; gap: 2px; }
.tool.drop::after { content: ""; border: 2px solid transparent; border-top-color: #222; border-bottom: 0; }
.tool.wide { width: auto; padding: 0 1px; }
.tool.letter { font: 700 8px/12px "Liberation Sans", sans-serif; color: #777; }
.drops { display: flex; gap: 1px; margin-left: 3px; }
.grip { width: 2px; height: 12px; margin: 0 1px; border-left: 1px solid #c2c0c2; }
.sep { width: 1px; height: 13px; margin: 0 1px; background: #c6c4c6; }

.workspace { flex: 1; display: flex; }
.side { width: 113px; display: flex; flex-direction: column; gap: 3px; padding-right: 2px; font-family: Roboto, "Noto Sans", sans-serif; }
.panel { border: 1px solid #d4d2d6; border-right-color: #c4c2c6; }
.panel-head { display: flex; align-items: center; justify-content: space-between; height: 9px; padding-right: 1px; }
.panel-head h2 { width: 101px; padding-left: 1px; background: linear-gradient(90deg, #6fa3da, #98c2ea); color: #e8f2fc; line-height: 9px; white-space: nowrap; }
.panel-head button { width: 7px; font-weight: 700; font-size: 8px; line-height: 8px; }
.panel-body { display: flex; background: #fff; margin-left: 1px; }
.clip { flex: 1; min-width: 0; overflow: hidden; }
.quotes-clip { height: 136px; }
.tree-clip { height: 137px; }
.quotes { width: 100%; table-layout: fixed; }
.quotes tr { height: 12px; }
.quotes th, .quotes td { padding: 0 3px 0 0; border-right: 1px solid #d4dcd4; border-bottom: 1px solid #dde6dd; font-weight: 400; text-align: right; line-height: 11px; white-space: nowrap; }
.quotes th:first-child, .quotes td:first-child { width: 44px; text-align: left; padding: 0 0 0 3px; }
.quotes td { background: #f2fff2; }
.quotes td:not(:first-child) { font-family: "DejaVu Sans Condensed", "Noto Sans", sans-serif; }
.quotes td svg { display: inline-block; width: 6px; height: 6px; margin-right: 3px; }
.up svg { color: #2f9a48; } .down svg { color: #cf4630; }
.up td + td { color: #1330c0; } .down td + td { color: #d62014; }
.scrollbar { width: 9px; display: flex; flex-direction: column; background: #f3f3fb; }
.scrollbar button { height: 9px; border: 1px solid #a9c1ea; border-radius: 1px; background: #c6d8fa; }
.scrollbar svg { width: 7px; height: 7px; }
.thumb { border: 1px solid #a6c0ee; border-radius: 1px; background: #c4d6fa; margin-bottom: auto; }
.quotes-thumb { height: 70px; } .tree-thumb { height: 80px; }

.tabs { display: flex; color: #9a989c; }
.tabs button { padding: 0 5px; position: relative; white-space: nowrap; }
.tabs button:not(.active)::after { content: ""; position: absolute; right: 0; top: 3px; height: 7px; border-right: 1px solid #a8a6aa; }
.tabs .active { background: #fff; color: #111; border: 1px solid #444; border-top: 0; }
.side-tabs { border-top: 1px solid #555; height: 12px; line-height: 10px; padding-left: 2px; }
.side-tabs button { padding: 0 5px; }

.tree { line-height: 11px; white-space: nowrap; }
.tree li { display: flex; align-items: center; gap: 3px; height: 11px; padding-left: 5px; }
.tree svg { width: 10px; height: 10px; }
.tree .root { padding-left: 3px; }
.tree .leaf { padding-left: 28px; background: repeating-linear-gradient(90deg, #aaa 0 1px, #fff 1px 2px) 20px 5px / 7px 1px no-repeat; }
.box { width: 5px; height: 5px; margin-right: 2px; border: 1px solid #999; font: 5px/3px "Liberation Sans", sans-serif; text-align: center; }
.c-gold { color: #eeb630; } .c-green { color: #35aa46; } .c-blue { color: #3f94c8; } .c-gray { color: #8d9294; }

.charts { flex: 1; min-width: 0; display: flex; flex-direction: column; }
.chart { flex: 1; display: grid; grid-template: minmax(0, 1fr) 10px / minmax(0, 1fr) 23px; padding-top: 1px; background: #000; border: 2px solid #9a989c; border-top-width: 1px; border-right-width: 1px; border-bottom-width: 1px; color: #d4d4d4; font-size: 6px; line-height: 7px; }
.plot { position: relative; border: solid #b8b8b8; border-width: 1px 1px 1px 0; overflow: hidden; }
.plot svg { position: absolute; inset: 0; width: 100%; height: 100%; }
.plot path { fill: none; }
.grid { stroke: #505860; stroke-dasharray: 2 2; }
.day { stroke: #a0a4a8; }
.pend-line { stroke: #235c25; stroke-dasharray: 6 2 2 2; }
.ask-line { stroke: #a81418; } .bid-line { stroke: #80868e; }
.wick { stroke-width: 1; } .body { stroke-width: 2; }
.g { stroke: #4aa838; } .b { stroke: #0a6ca8; }
.body.g { stroke: #58b83e; } .body.b { stroke: #0c7cc0; }
.plot .marker { fill: #999; }
.ohlc, .robot, .pending, .comment { position: absolute; white-space: nowrap; }
.ohlc { left: 3px; top: 1px; }
.robot { right: 3px; top: 2px; }
.robot span { font-family: "DejaVu Sans", sans-serif; font-size: 8px; }
.pending { left: 3px; top: 61px; color: #c4c4c4; }
.comment { left: 3px; top: 21px; font: 7px/9px "Liberation Sans", Arial, sans-serif; color: #94948f; }
.comment p { display: flex; }
.c0 { width: 81px; } .c1 { width: 132px; } .c2 { width: 168px; } .c3 { width: 212px; } .c4 { width: 147px; } .c5 { width: 110px; }
.yellow { color: #e2e230; } .mint { color: #22c468; } .sky { color: #1a90c8; } .red { color: #c41418; } .gold { color: #cfae1c; } .tan { color: #c8b48c; } .green { color: #42b034; }
.later { margin-top: 45px; }
.prices { position: relative; display: flex; flex-direction: column; }
.prices span { flex: 1; display: flex; align-items: center; gap: 1px; }
.prices span::before { content: ""; width: 2px; height: 1px; background: #b8b8b8; }
.tag { position: absolute; left: 0; width: 19px; height: 7px; padding-left: 3px; font-weight: 400; }
.ask { top: 62%; background: #f00; color: #600; } .bid { top: 65%; background: #fff; color: #222; }
.times { grid-column: 1 / -1; display: grid; grid-template-columns: repeat(17, minmax(0, 1fr)); padding-top: 2px; white-space: nowrap; }
.chart-tabs { height: 12px; padding-left: 1px; }
.chart-tabs button { padding: 0 6px; }
.pager { margin-left: auto; padding-right: 4px; color: #666; }

.terminal { display: flex; border-top: 1px solid #c6c4c8; padding-top: 1px; }
.rail { width: 9px; display: flex; flex-direction: column; align-items: center; }
.rail button { font-weight: 700; font-size: 8px; line-height: 8px; }
.rail h2 { flex: 1; width: 8px; background: linear-gradient(90deg, #5e98d2, #86b6e6); color: #e8f2fc; line-height: 8px; writing-mode: vertical-rl; transform: rotate(180deg); }
.terminal-main { flex: 1; min-width: 0; padding-right: 2px; }
.deals { width: 100%; table-layout: fixed; background: #fff; }
.w67 { width: 67px; } .w114 { width: 114px; } .w51 { width: 51px; } .w41 { width: 41px; } .w52 { width: 52px; } .w61 { width: 61px; }
.deals tr { height: 12px; }
.deals th, .deals td { padding: 0 2px; border-right: 1px solid #dcdadc; text-align: right; font-weight: 400; line-height: 12px; white-space: nowrap; }
.deals th { padding-right: 4px; border-bottom: 1px solid #c4c2c4; border-top: 1px solid #aaa; }
.deals th:first-child, .deals td:first-child { text-align: left; }
.deals th:first-child { padding-left: 4px; }
.deals th i { color: #999; }
.deals tr:nth-child(even) td { background: #ebebeb; }
.deals td svg { display: inline-block; width: 10px; height: 10px; margin-right: 4px; vertical-align: middle; }
.sell svg { color: #d0442e; } .buy svg { color: #2f7fc0; }
.deals tr .hit { background: #ff9c9c; }
.summary { display: flex; align-items: center; gap: 7px; height: 12px; padding: 0 2px 0 5px; background: #c6c6c6; font-family: Roboto, "Noto Sans", sans-serif; font-weight: 700; }
.mark { width: 3px; color: #777; }
.total { margin-left: auto; }
.term-tabs { margin-top: 2px; border-top: 1px solid #555; height: 14px; padding-left: 2px; }
.term-tabs button { padding: 0 6px; height: 12px; }
.status { display: flex; align-items: center; height: 14px; padding-top: 2px; border-top: 1px solid #b0aeb2; }
.status span { height: 9px; line-height: 9px; border-left: 1px solid #b8b6ba; padding-left: 2px; }
.status .hint { flex: 1; border: 0; padding-left: 1px; }
.s-profile { width: 65px; } .s-a { width: 61px; } .s-b { width: 42px; }
.status .conn { width: 78px; padding-left: 42px; }
.conn svg { width: 15px; height: 8px; }
.status .s-kb { width: 53px; border: 0; }
.resize { width: 8px; height: 8px; align-self: flex-end; }
.taskbar { height: 3px; background: linear-gradient(90deg, #8cbfa0 50px, #72a6dc 50px 83%, #aaa 83%); }
```
